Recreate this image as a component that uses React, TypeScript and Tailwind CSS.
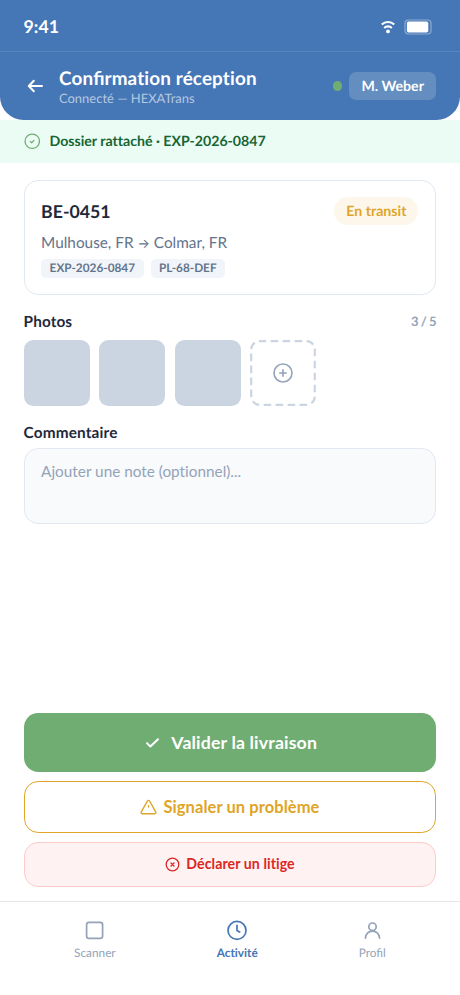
import type { ReactNode } from 'react';

const TAGS = ['EXP-2026-0847', 'PL-68-DEF'];
const PHOTOS = [1, 2, 3];

function StatusBar() {
  return (
    <div className="flex h-[52px] items-center justify-between border-b border-[#5684c0] pl-[23.6px] pr-[27.6px] pt-[2px]">
      <span className="pt-px text-[17.7px] font-bold leading-none text-white">9:41</span>
      <div className="flex items-center gap-[9px]">
        <svg width="14" height="14" viewBox="0 0 14 14" fill="none" stroke="#fff" strokeWidth="2.1">
          <path d="M.8 4.500C4.200 1.100 9.800 1.100 13.200 4.500" />
          <path d="M3.200 7.900c2.100-2 5.500-2 7.600 0" />
          <circle cx="7" cy="11.400" r="1.900" fill="#fff" stroke="none" />
        </svg>
        <svg width="28" height="16" viewBox="0 0 28 16" fill="none">
          <rect x="1" y="1" width="26" height="14" rx="3.5" stroke="#fff" strokeOpacity=".4" strokeWidth="1.2" />
          <rect x="2.9" y="2.6" width="21.4" height="10.8" rx="1.6" fill="#fff" />
        </svg>
      </div>
    </div>
  );
}

function Header() {
  return (
    <header className="h-[120px] rounded-b-[23.6px] bg-[#4576b5]">
      <StatusBar />
      <div className="flex h-[68px] items-center pl-[23.6px] pr-[23.6px]">
        <svg width="24" height="24" viewBox="0 0 24 24" fill="none" stroke="#fff" strokeWidth="2" strokeLinecap="round" strokeLinejoin="round">
          <path d="M18 12H5M9.800 6.800 4.800 12l5 5.200" />
        </svg>
        <div className="ml-[11.4px] flex flex-1 flex-col">
          <h1 className="text-[18.87px] font-bold leading-[23px] tracking-[0.14px] text-white">
            Con<span className="tracking-normal [font-variant-ligatures:normal]">fi</span>rmation réception
          </h1>
          <p className="text-[12.97px] leading-[16px] text-[#b5c8e1]">Connecté — HEXATrans</p>
        </div>
        <span className="mr-[7px] h-[9.4px] w-[9.4px] rounded-full bg-[#70ad72]" />
        <span className="flex h-[28px] w-[87.4px] items-center justify-center rounded-[7px] bg-[#648dc0] pt-px text-[14.15px] font-bold text-white">M. Weber</span>
      </div>
    </header>
  );
}

function Banner() {
  return (
    <div className="flex h-[43px] items-center gap-[9.4px] bg-[#ebfcf4] px-[23.6px]">
      <svg width="16.5" height="16.5" viewBox="0 0 16.5 16.5" fill="none" stroke="#70ad72" strokeWidth="1.3" strokeLinecap="round" strokeLinejoin="round">
        <circle cx="8.25" cy="8.25" r="7.2" />
        <path d="m6.300 8.600 1.400 1.100 2.300-2.300" />
      </svg>
      <span className="text-[14.15px] font-bold leading-[17px] text-[#166534]">Dossier rattaché · EXP-2026-0847</span>
    </div>
  );
}

function ShipmentCard() {
  return (
    <section className="mt-[17px] h-[115px] rounded-[14.2px] border border-[#e2e8f0] bg-white pl-[16.5px] pr-[17px] pt-[16px]">
      <div className="flex h-[28px] items-center justify-between">
        <h2 className="pt-[2px] text-[17.7px] font-bold text-[#1e293b]">BE-0451</h2>
        <span className="flex h-[28px] items-center rounded-full bg-[#fdf7eb] px-[12px] pt-px text-[14.15px] font-bold text-[#e0a526]">En transit</span>
      </div>
      <p className="mt-[7px] h-[22px] text-[15.33px] leading-[22px] text-[#64748b]">
        Mulhouse, FR <span className="font-['Inter'] text-[13px] leading-none">→</span> Colmar, FR
      </p>
      <div className="mt-[4.500px] flex gap-[7px]">
        {TAGS.map((tag) => (
          <span key={tag} className="flex h-[19px] items-center rounded-[4.7px] bg-[#f1f5f9] px-[8.500px] text-[11.8px] font-bold text-[#64748b]">{tag}</span>
        ))}
      </div>
    </section>
  );
}

function Photos() {
  return (
    <section>
      <div className="mt-[17px] flex h-[20px] items-center justify-between">
        <h3 className="text-[15.33px] font-bold tracking-[0.1px] text-[#1e293b]">Photos</h3>
        <span className="text-[12.97px] font-bold text-[#94a3b8] [word-spacing:-1px]">3 / 5</span>
      </div>
      <div className="mt-[8px] flex gap-[9.5px]">
        {PHOTOS.map((photo) => (
          <div key={photo} className="h-[66px] w-[66px] rounded-[9.4px] bg-[#cbd5e1]" />
        ))}
        <button type="button" aria-label="Ajouter une photo" className="h-[66px] w-[66px]">
          <svg width="66" height="66" viewBox="0 0 66 66" fill="none">
            <rect x="1.200" y="1.200" width="63.600" height="63.600" rx="8.400" stroke="#cbd5e1" strokeWidth="2.2" strokeDasharray="7.600 4.400" strokeDashoffset="1" />
            <g stroke="#94a3b8" strokeWidth="1.6" strokeLinecap="round">
              <circle cx="33" cy="33" r="9" />
              <path d="M33 29.800v6.400M29.800 33h6.400" />
            </g>
          </svg>
        </button>
      </div>
    </section>
  );
}

function Comment() {
  return (
    <section className="mt-[17px]">
      <h3 className="h-[20px] text-[15.33px] font-bold leading-[20px] tracking-[0.16px] text-[#1e293b]">Commentaire</h3>
      <textarea
        className="mt-[5px] block h-[76px] w-full resize-none rounded-[14.2px] border border-[#e2e8f0] bg-[#f8fafc] px-[16.5px] py-[11px] text-[15.33px] leading-[22px] outline-none placeholder:text-[#94a3b8]"
        placeholder="Ajouter une note (optionnel)..."
      />
    </section>
  );
}

function Actions() {
  return (
    <div className="mt-auto flex flex-col gap-[9.5px] pb-[14px]">
      <button type="button" className="flex h-[59px] items-center justify-center gap-[9.4px] rounded-[14.2px] bg-[#70ad72] pt-[2px] text-[17.7px] font-bold tracking-[0.16px] text-white">
        <svg width="19" height="19" viewBox="0 0 19 19" fill="none" stroke="#fff" strokeWidth="2" strokeLinecap="round" strokeLinejoin="round">
          <path d="m4 9.100 3.400 3.400L15 5.200" />
        </svg>
        Valider la livraison
      </button>
      <button type="button" className="flex h-[51.7px] items-center justify-center gap-[6px] rounded-[14.2px] border border-[#e0a526] bg-white pt-px text-[16.5px] font-bold tracking-[0.07px] text-[#e0a526]">
        <svg width="17" height="17" viewBox="0 0 17 17" fill="none" stroke="#e0a526" strokeWidth="1.4" strokeLinecap="round" strokeLinejoin="round">
          <path d="M7.400 2 1.300 12.900c-.500 1 .100 1.900 1.100 1.900h12.200c1 0 1.600-.9 1.100-1.900L9.600 2c-.500-.8-1.700-.8-2.200 0Z" />
          <path d="M8.500 6.700v1.300" />
        </svg>
        Signaler un problème
      </button>
      <button type="button" className="flex h-[44.8px] items-center justify-center gap-[6px] rounded-[14.2px] border border-[#fecaca] bg-[#fef2f2] pb-px text-[14.15px] font-bold tracking-[0.08px] text-[#dc2626]">
        <svg width="15" height="15" viewBox="0 0 15 15" fill="none" stroke="#dc2626" strokeWidth="1.3" strokeLinecap="round">
          <circle cx="7.500" cy="7.500" r="6.300" />
          <path d="m6 6 3 3M9 6 6 9" />
        </svg>
        Déclarer un litige
      </button>
    </div>
  );
}

function Tab({ label, active, children }: { label: ReactNode; active?: boolean; children: ReactNode }) {
  return (
    <div className={active ? 'flex flex-col items-center font-bold text-[#4576b5]' : 'flex flex-col items-center text-[#94a3b8]'}>
      <svg width="24" height="24" viewBox="0 0 24 24" fill="none" stroke="currentColor" strokeWidth="1.7" strokeLinecap="round" strokeLinejoin="round">
        {children}
      </svg>
      <span className="mt-[3px] text-[11.800px] leading-[15px]">{label}</span>
    </div>
  );
}

function TabBar() {
  return (
    <nav className="flex h-[94px] justify-around border-t border-[#e5e7eb] bg-white px-[23.6px] pt-[16.400px]">
      <Tab label="Scanner">
        <rect x="3.600" y="4.400" width="16" height="16" rx="2.400" />
      </Tab>
      <Tab label="Activité" active>
        <circle cx="12" cy="12.400" r="9" />
        <path d="M12 7.400v5.200l2.700 1.500" />
      </Tab>
      <Tab label={<span className="[font-variant-ligatures:normal]">Profil</span>}>
        <circle cx="12.500" cy="8.700" r="3.700" />
        <path d="M5.400 20.200c.6-4 3.200-7 7.100-7s6.500 3 7.100 7" />
      </Tab>
    </nav>
  );
}

export default function App() {
  return (
    <div className="flex h-[995px] w-[460px] flex-col overflow-hidden bg-white font-['Lato',sans-serif] [font-variant-ligatures:none] [text-rendering:geometricPrecision]">
      <Header />
      <Banner />
      <main className="flex flex-1 flex-col px-[23.6px]">
        <ShipmentCard />
        <Photos />
        <Comment />
        <Actions />
      </main>
      <TabBar />
    </div>
  );
}
